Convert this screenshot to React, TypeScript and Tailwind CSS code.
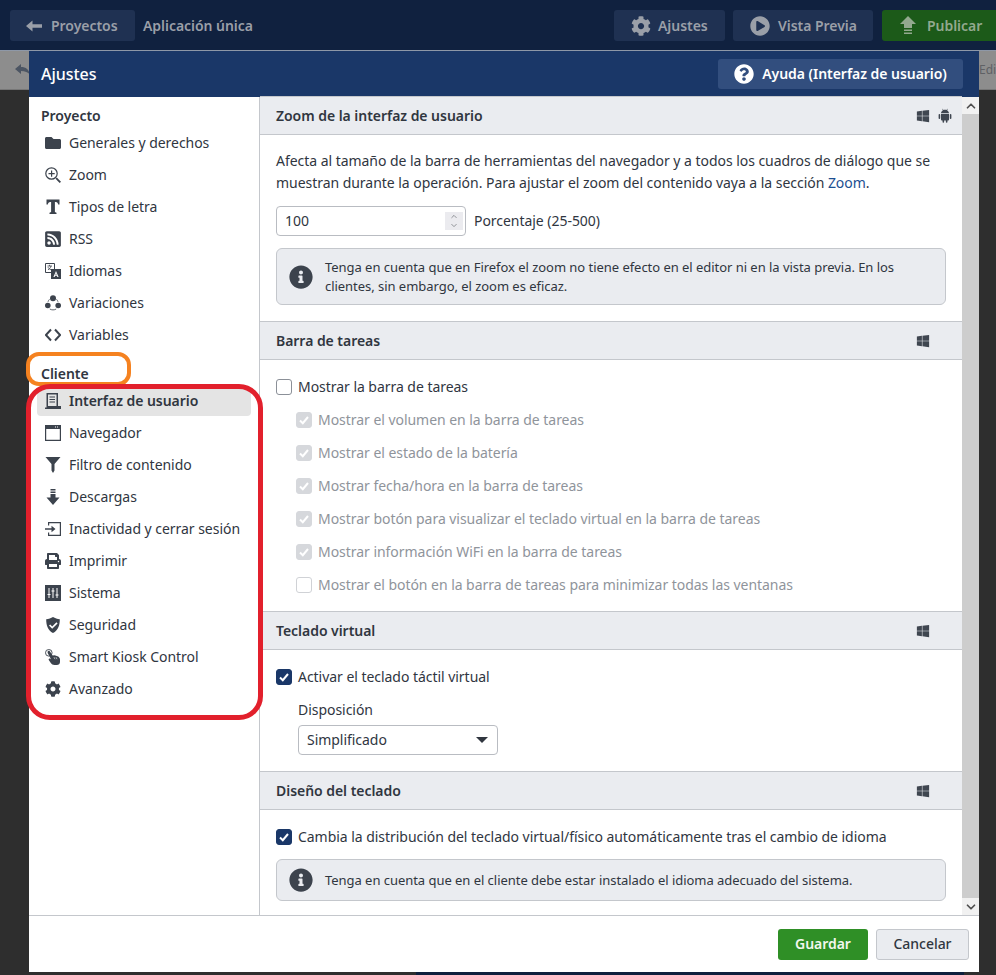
import type { ReactNode } from 'react'
import { FaCog, FaFolder, FaInfoCircle, FaPlayCircle, FaPrint, FaQuestionCircle, FaRssSquare, FaWindows } from 'react-icons/fa'
import { LuChevronUp, LuChevronDown } from 'react-icons/lu'

const Svg = ({ children }: { children: ReactNode }) => (
  <svg viewBox="0 0 16 16" className="w-4 h-4" fill="currentColor">
    {children}
  </svg>
)

const ZoomIcon = () => (
  <Svg>
    <circle cx="6.500" cy="6.500" r="5.700" fill="none" stroke="currentColor" strokeWidth="1.200" />
    <path d="M6 3.500h1.200V6h2.500v1.200H7.200v2.500H6V7.200H3.500V6H6z" />
    <path d="M10.500 11.800 11.800 10.500 16 14.700 14.700 16z" />
  </Svg>
)
const TypeIcon = () => (
  <Svg>
    <path d="M1.500 .5h13v5h-1.300c-.3-1.600-.9-2.500-2.400-2.500h-.9v10l1.600.7V15H4.500v-1.300l1.600-.7V3h-.9c-1.500 0-2.100.9-2.400 2.500H1.500z" />
  </Svg>
)
const LanguageIcon = () => (
  <Svg>
    <path d="M.5.500h9v9h-9z" fill="#fff" stroke="currentColor" />
    <path d="M2.500 3h4.500M4.500 1.800v1.200M3 6.800c1.500-.8 2.500-2 3-3.800M3 4.200c.6 1.200 1.500 2 3 2.600" fill="none" stroke="currentColor" strokeWidth=".8" />
    <path fillRule="evenodd" d="M6 6h10v10H6zm5 2-2.600 6h1.200l.5-1.300h1.800l.5 1.300h1.200L11 8zm0 2.200.6 1.600h-1.200z" />
  </Svg>
)
const VariationsIcon = () => (
  <Svg>
    <circle cx="8" cy="3.200" r="3" />
    <circle cx="2.800" cy="10.500" r="2.800" />
    <circle cx="13.200" cy="10.500" r="2.800" />
    <path d="M3 6.800C3.300 5.800 3.800 5 4.500 4.300M13 6.800c-.3-1-.8-1.800-1.500-2.500M4.800 14c1.900 1.200 4.500 1.200 6.400 0" stroke="currentColor" strokeWidth=".8" fill="none" />
  </Svg>
)
const CodeIcon = () => (
  <Svg>
    <path d="M6 2.500.9 8 6 13.500M10 2.500 15.100 8 10 13.500" fill="none" stroke="currentColor" strokeWidth="2" />
  </Svg>
)
const UiIcon = () => (
  <Svg>
    <path fillRule="evenodd" d="M1.500 0H13v13h3v3H0v-1.500h1.500zM3 1.500V13h8.500V1.500z" />
    <path d="M4.500 3.500h5.500v1H4.500zM4.500 6h5.500v1H4.500zM4.500 8.500h5.500v1H4.500z" />
  </Svg>
)
const BrowserIcon = () => (
  <Svg>
    <path fillRule="evenodd" d="M0 0h16v16H0zm1.200 4v10.800h13.600V4zM10 1.500v1h1v-1zm2 0v1h1v-1z" />
  </Svg>
)
const FilterIcon = () => (
  <Svg>
    <path d="M.5 0h15L9.500 7v6.500L8 16l-1.500-2.500V7z" />
  </Svg>
)
const DownloadIcon = () => (
  <Svg>
    <path d="M5.500 0h5v1.400h-5zM5.500 2.500h5v1.400h-5zM5.500 5h5v3.500h4L8 16 1.500 8.500h4z" />
  </Svg>
)
const LogoutIcon = () => (
  <Svg>
    <path d="M3 1h13v14H3v-3.500h1.200v2.300h10.600V2.200H4.200v2.300H3z" />
    <path d="M0 7.300h6.500V4.800L10.500 8l-4 3.200V8.700H0z" />
  </Svg>
)
const SystemIcon = () => (
  <Svg>
    <path d="M0 0h16v16H0z" />
    <path d="M4 3v10M2.500 9.500h3M8 3v10M6.500 6h3M12 3v10M10.500 10h3" fill="none" stroke="#fff" strokeWidth="1" />
  </Svg>
)
const ShieldIcon = () => (
  <Svg>
    <path fillRule="evenodd" d="M8 0c2 1.300 4.300 2 6.800 2.200 0 6-1.500 11-6.800 13.800C2.700 13.200 1.200 8.200 1.200 2.200 3.700 2 6 1.300 8 0zm3.400 5.300L7.200 9.400 5.200 7.400 4 8.600l3.200 3.200 5.400-5.300z" />
  </Svg>
)
const HandIcon = () => (
  <Svg>
    <circle cx="3.800" cy="3.800" r="3.300" fill="none" stroke="currentColor" strokeWidth=".9" />
    <path d="M2.800 2.300c.6-.8 1.700-.7 2.200.1L7.600 6.500l1.900-.3 3 1c1.700.7 2.500 1.900 2.500 3.300V13c0 1.800-1.400 3-3.200 3H9.500c-1.700 0-2.900-.8-3.700-2L3.800 11c-.6-1 .6-2 1.500-1.200l.9.800L2.800 4.200c-.3-.6-.4-1.300 0-1.900z" />
    <path d="M9 8.200l1 2M11 8.200l1 2" fill="none" stroke="#fff" strokeWidth=".6" />
  </Svg>
)
const AndroidIcon = () => (
  <svg viewBox="0 0 16 16" className="w-[14px] h-[15px]" fill="currentColor">
    <path d="M3.400 5.500C3.600 3.800 4.500 2.700 5.700 2.100L4.900.7l.5-.3.8 1.400c1.200-.4 2.400-.4 3.600 0l.8-1.400.5.3-.8 1.400c1.200.6 2.100 1.700 2.300 3.400z" />
    <path d="M3.400 6.200h9.200v6.500c0 .6-.4 1-1 1h-.8v1.800a.9.900 0 0 1-1.800 0v-1.800H7v1.800a.9.900 0 0 1-1.800 0v-1.800h-.8c-.6 0-1-.4-1-1z" />
    <path d="M1.600 6.200c.5 0 .9.400.9.900v4a.9.900 0 0 1-1.800 0v-4c0-.5.400-.9.900-.9zM14.400 6.200c.5 0 .9.400.9.900v4a.9.900 0 0 1-1.800 0v-4c0-.5.400-.9.900-.9z" />
  </svg>
)

const projectItems = [
  { label: 'Generales y derechos', icon: <FaFolder className="w-4 h-4" /> },
  { label: 'Zoom', icon: <ZoomIcon /> },
  { label: 'Tipos de letra', icon: <TypeIcon /> },
  { label: 'RSS', icon: <FaRssSquare className="w-[18px] h-[18px]" /> },
  { label: 'Idiomas', icon: <LanguageIcon /> },
  { label: 'Variaciones', icon: <VariationsIcon /> },
  { label: 'Variables', icon: <CodeIcon /> },
]

const clientItems = [
  { label: 'Interfaz de usuario', icon: <UiIcon />, active: true },
  { label: 'Navegador', icon: <BrowserIcon /> },
  { label: 'Filtro de contenido', icon: <FilterIcon /> },
  { label: 'Descargas', icon: <DownloadIcon /> },
  { label: 'Inactividad y cerrar sesión', icon: <LogoutIcon /> },
  { label: 'Imprimir', icon: <FaPrint className="w-4 h-4" /> },
  { label: 'Sistema', icon: <SystemIcon /> },
  { label: 'Seguridad', icon: <ShieldIcon /> },
  { label: 'Smart Kiosk Control', icon: <HandIcon /> },
  { label: 'Avanzado', icon: <FaCog className="w-4 h-4" /> },
]

function NavItem({ label, icon, active }: { label: string; icon: ReactNode; active?: boolean }) {
  return (
    <div className={`flex items-center h-[30px] mb-[2px] rounded-[4px] pl-2 ${active ? 'bg-[#e4e4e4] font-semibold' : ''}`}>
      <span className="w-4 flex justify-center text-[#3c434d]">{icon}</span>
      <span className="ml-2">{label}</span>
    </div>
  )
}

function TopButton({ icon, label, className }: { icon: ReactNode; label: string; className: string }) {
  return (
    <div className={`h-[31px] rounded-[3px] flex items-center font-semibold ${className}`}>
      {icon}
      <span>{label}</span>
    </div>
  )
}

function SectionHeader({ title, android }: { title: string; android?: boolean }) {
  return (
    <div className="h-[39px] bg-[#eaecf0] border-y border-[#c4c7cc] flex items-center pl-4 pr-[10px] font-semibold">
      <span className="flex-1">{title}</span>
      <span className="flex items-center gap-2 text-[#3f4650]">
        <FaWindows className="w-[14px] h-[14px]" />
        <span className="w-[14px]">{android && <AndroidIcon />}</span>
      </span>
    </div>
  )
}

function Check({ label, checked, muted }: { label: string; checked?: boolean; muted?: boolean }) {
  const box = checked
    ? muted
      ? 'bg-[#d6d8dc] border-[#d6d8dc]'
      : 'bg-[#1a3768] border-[#1a3768]'
    : muted
      ? 'bg-white border-[#d0d2d6]'
      : 'bg-white border-[#8b9098]'
  return (
    <div className={`flex items-center gap-[6px] h-[22px] ${muted ? 'text-[#8f949b]' : ''}`}>
      <span className={`w-4 h-4 rounded-[3px] border-[1.5px] flex items-center justify-center ${box}`}>
        {checked && (
          <svg viewBox="0 0 12 12" className="w-3 h-3" fill="none" stroke="white" strokeWidth="2">
            <path d="M2 6.500 4.800 9.200 10 3" />
          </svg>
        )}
      </span>
      <span>{label}</span>
    </div>
  )
}

function Note({ children, className }: { children: ReactNode; className: string }) {
  return (
    <div className={`mx-4 rounded-[6px] border border-[#c4c7cc] bg-[#eaecf0] flex items-center pl-3 pr-3 text-[13px] leading-[19px] ${className}`}>
      <FaInfoCircle className="w-6 h-6 shrink-0 text-[#3c434d]" />
      <div className="ml-3">{children}</div>
    </div>
  )
}

export default function App() {
  return (
    <div className="relative w-[996px] h-[975px] overflow-hidden bg-[#2e2e2e] text-[14px] leading-[22px] tracking-[-0.04px] text-[#30363f] font-['Noto_Sans',sans-serif]">
      <div className="h-[51px] pt-px bg-[#10213f] border-b border-[#8e98a8] flex items-center pl-[10px] text-[#9a9fa8]">
        <TopButton
          className="w-[125px] bg-[#1f3152] pl-[16px] gap-[9px]"
          label="Proyectos"
          icon={
            <svg viewBox="0 0 16 12" className="w-4 h-3" fill="currentColor">
              <path d="M0 6 6.500.5v3.700H16v3.600H6.500v3.700z" />
            </svg>
          }
        />
        <span className="ml-2 font-semibold">Aplicación única</span>
        <div className="ml-auto flex gap-2 -mr-2">
          <TopButton
            className="w-[111px] bg-[#1f3152] pl-[17px] gap-[7px]"
            label="Ajustes"
            icon={<FaCog className="w-5 h-5" />}
          />
          <TopButton
            className="w-[140px] bg-[#1f3152] pl-[17px] gap-[8px]"
            label="Vista Previa"
            icon={<FaPlayCircle className="w-5 h-5" />}
          />
          <TopButton
            className="w-[122px] ml-px bg-[#1c5a19] pl-[18px] gap-[11px] text-[#93a98f]"
            label="Publicar"
            icon={
              <svg viewBox="0 0 16 20" className="w-4 h-5" fill="currentColor">
                <path d="M8 0 16 8h-4v4H4V8H0zM4 13.500h8V15H4zM4 16.500h8V18H4z" />
              </svg>
            }
          />
        </div>
      </div>
      <div className="h-[39px] bg-[#8d8d8d] border-b border-[#777] flex items-center justify-between pl-[15px] text-[12px] text-[#5f6165]">
        <svg viewBox="0 0 16 12" className="w-4 h-3 text-[#4c5563]" fill="currentColor">
          <path d="M0 5 6 0v3c5 0 8 2.500 9 8-2-3-5-4-9-4v3z" />
        </svg>
        <span className="w-[17px] overflow-hidden">Edi</span>
      </div>

      <div className="absolute left-[416px] top-[972px] w-[548px] h-[3px] bg-[#0e1f3d]" />

      {/* dialogo */}
      <div className="absolute left-[29px] top-[51px] w-[950px] h-[921px] bg-white flex flex-col">
        <div className="h-[46px] shrink-0 bg-[#1a3768] flex items-center justify-between pl-3 pr-4 text-white">
          <span className="text-[16px] font-medium">Ajustes</span>
          <div className="h-[30px] w-[245px] bg-[#324e7e] rounded-[3px] flex items-center justify-center gap-2 font-semibold">
            <FaQuestionCircle className="w-5 h-5" />
            Ayuda (Interfaz de usuario)
          </div>
        </div>

        <div className="flex flex-1 min-h-0">
          <div className="w-[231px] shrink-0 border-r border-[#c4c7cc] pl-2 pr-2">
            <div className="pl-1 pt-2 h-[31px] font-semibold">Proyecto</div>
            {projectItems.map((item) => (
              <NavItem key={item.label} {...item} />
            ))}
            <div className="pl-1 h-[31px] mt-[5px] pt-2 font-semibold">Cliente</div>
            {clientItems.map((item) => (
              <NavItem key={item.label} {...item} />
            ))}
          </div>

          <div className="flex-1 flex min-w-0">
            <div className="flex-1 min-w-0">
              <div className="-mt-px">
                <SectionHeader title="Zoom de la interfaz de usuario" android />
              </div>
              <div className="h-[186px] pt-[15px]">
                <p className="px-4">
                  Afecta al tamaño de la barra de herramientas del navegador y a todos los cuadros de diálogo que se
                  muestran durante la operación. Para ajustar el zoom del contenido vaya a la sección{' '}
                  <span className="text-[#1d4f91]">Zoom</span>.
                </p>
                <div className="mt-[12px] ml-4 flex items-center gap-2">
                  <div className="w-[190px] h-[30px] rounded-[4px] border border-[#b9bcc2] flex items-center justify-between pl-2 pr-[2px]">
                    <span>100</span>
                    <span className="w-[18px] h-[18px] bg-[#ebebef] flex flex-col items-center justify-center text-[#70747a]">
                      <LuChevronUp className="w-[14px] h-[9px]" />
                      <LuChevronDown className="w-[14px] h-[9px]" />
                    </span>
                  </div>
                  <span>Porcentaje (25-500)</span>
                </div>
                <Note className="mt-[12px] h-[57px]">
                  Tenga en cuenta que en Firefox el zoom no tiene efecto en el editor ni en la vista previa. En los
                  clientes, sin embargo, el zoom es eficaz.
                </Note>
              </div>

              <SectionHeader title="Barra de tareas" />
              <div className="h-[251px] pt-4 pl-4">
                <Check label="Mostrar la barra de tareas" />
                <div className="pl-5 pt-[11px] flex flex-col gap-[11px]">
                  <Check muted checked label="Mostrar el volumen en la barra de tareas" />
                  <Check muted checked label="Mostrar el estado de la batería" />
                  <Check muted checked label="Mostrar fecha/hora en la barra de tareas" />
                  <Check muted checked label="Mostrar botón para visualizar el teclado virtual en la barra de tareas" />
                  <Check muted checked label="Mostrar información WiFi en la barra de tareas" />
                  <Check muted label="Mostrar el botón en la barra de tareas para minimizar todas las ventanas" />
                </div>
              </div>

              <SectionHeader title="Teclado virtual" />
              <div className="h-[121px] pt-4 pl-4">
                <Check checked label="Activar el teclado táctil virtual" />
                <div className="pl-[22px] mt-[11px]">
                  <div>Disposición</div>
                  <div className="mt-1 w-[200px] h-[30px] rounded-[4px] border border-[#b9bcc2] flex items-center justify-between pl-2 pr-[9px]">
                    <span>Simplificado</span>
                    <span className="w-0 h-0 border-x-[6px] border-x-transparent border-t-[6px] border-t-[#30363f]" />
                  </div>
                </div>
              </div>

              <SectionHeader title="Diseño del teclado" />
              <div className="pt-4 pl-4">
                <Check checked label="Cambia la distribución del teclado virtual/físico automáticamente tras el cambio de idioma" />
              </div>
              <Note className="mt-[11px] h-[42px]">
                Tenga en cuenta que en el cliente debe estar instalado el idioma adecuado del sistema.
              </Note>
            </div>

            <div className="w-[17px] shrink-0 bg-[#f1f1f1] flex flex-col text-[#505050]">
              <div className="h-[17px] flex items-center justify-center">
                <LuChevronUp className="w-[14px] h-[14px]" strokeWidth={3} />
              </div>
              <div className="flex-1 bg-[#cdcdcd]" />
              <div className="h-[17px] flex items-center justify-center">
                <LuChevronDown className="w-[14px] h-[14px]" strokeWidth={3} />
              </div>
            </div>
          </div>
        </div>

        <div className="h-[57px] shrink-0 border-t border-[#c4c7cc] flex items-center justify-end gap-[8px] pr-[10px]">
          <div className="w-[90px] h-[31px] rounded-[3px] bg-[#2f8f26] text-[#f2f7ee] font-semibold flex items-center justify-center">
            Guardar
          </div>
          <div className="w-[93px] h-[31px] rounded-[3px] bg-[#eaecf0] border border-[#c4c7cc] font-medium flex items-center justify-center">
            Cancelar
          </div>
        </div>
      </div>

      {/* marcas de la captura */}
      <div className="absolute left-[26px] top-[352px] w-[105px] h-[34px] rounded-[13px] border-[4px] border-[#f58220]" />
      <div className="absolute left-[26px] top-[384px] w-[237px] h-[336px] rounded-[24px] border-[5px] border-[#e2202c]" />
    </div>
  )
}
